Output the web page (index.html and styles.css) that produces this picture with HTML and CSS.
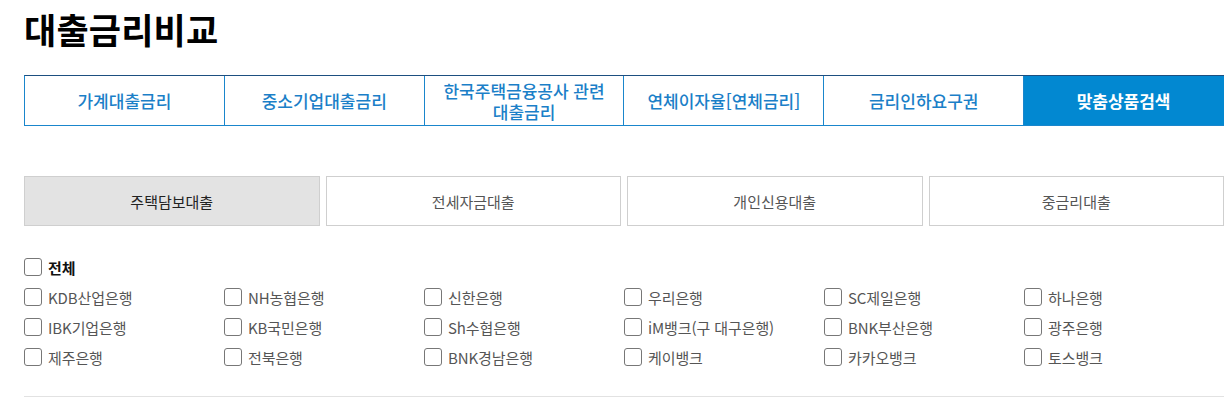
FILE: index.html
```html
<!DOCTYPE html>
<html lang="ko">
<head>
<meta charset="utf-8">
<title>대출금리비교</title>
<link rel="stylesheet" href="styles.css">
</head>
<body>
<div class="page">
  <h1 class="title">대출금리비교</h1>
  <nav class="tabs">
    <a class="tab">가계대출금리</a>
    <a class="tab">중소기업대출금리</a>
    <a class="tab">한국주택금융공사 관련<br>대출금리</a>
    <a class="tab">연체이자율[연체금리]</a>
    <a class="tab">금리인하요구권</a>
    <a class="tab tab-active">맞춤상품검색</a>
  </nav>
  <div class="subtabs">
    <a class="subtab subtab-active">주택담보대출</a>
    <a class="subtab">전세자금대출</a>
    <a class="subtab">개인신용대출</a>
    <a class="subtab">중금리대출</a>
  </div>
  <div class="checks">
    <label class="check check-all"><span class="box"></span>전체</label>
    <div class="check-grid">
      <label class="check"><span class="box"></span>KDB산업은행</label>
      <label class="check"><span class="box"></span>NH농협은행</label>
      <label class="check"><span class="box"></span>신한은행</label>
      <label class="check"><span class="box"></span>우리은행</label>
      <label class="check"><span class="box"></span>SC제일은행</label>
      <label class="check"><span class="box"></span>하나은행</label>
      <label class="check"><span class="box"></span>IBK기업은행</label>
      <label class="check"><span class="box"></span>KB국민은행</label>
      <label class="check"><span class="box"></span>Sh수협은행</label>
      <label class="check"><span class="box"></span>iM뱅크(구 대구은행)</label>
      <label class="check"><span class="box"></span>BNK부산은행</label>
      <label class="check"><span class="box"></span>광주은행</label>
      <label class="check"><span class="box"></span>제주은행</label>
      <label class="check"><span class="box"></span>전북은행</label>
      <label class="check"><span class="box"></span>BNK경남은행</label>
      <label class="check"><span class="box"></span>케이뱅크</label>
      <label class="check"><span class="box"></span>카카오뱅크</label>
      <label class="check"><span class="box"></span>토스뱅크</label>
    </div>
  </div>
  <div class="divider"></div>
</div>
</body>
</html>
```
FILE: styles.css
```css
* { box-sizing: border-box; }
html, body { margin: 0; padding: 0; background: #fff; }
body {
  font-family: "Noto Sans CJK KR", "Noto Sans", sans-serif;
  color: #333;
}
.page {
  width: 1200px;
  margin-left: 24px;
}
.title {
  margin: 8px 0 0;
  font-size: 35px;
  line-height: 42px;
  font-weight: 700;
  color: #000;
  letter-spacing: 0.2px;
}
.tabs {
  display: flex;
  margin-top: 25px;
  border-top: 1px solid #1d4f80;
  border-bottom: 1px solid #1a86cc;
  border-left: 1px solid #1a86cc;
  height: 51px;
}
.tab {
  flex: 1 1 0;
  display: flex;
  align-items: center;
  justify-content: center;
  text-align: center;
  font-size: 17px;
  line-height: 21px;
  font-weight: 500;
  color: #1b7fc8;
  letter-spacing: 0;
  border-right: 1px solid #1a86cc;
}
.tab-active {
  background: #0288d1;
  color: #fff;
  font-weight: 700;
  border-right-color: #0288d1;
}
.subtabs {
  display: flex;
  gap: 6px;
  margin-top: 50px;
}
.subtab {
  flex: 1 1 0;
  height: 50px;
  display: flex;
  align-items: center;
  justify-content: center;
  border: 1px solid #cfcfcf;
  font-size: 15px;
  color: #555;
  letter-spacing: 0;
}
.subtab-active {
  background: #e3e3e3;
  color: #222;
}
.checks {
  margin-top: 26px;
}
.check {
  display: flex;
  align-items: center;
  height: 30px;
  font-size: 15px;
  color: #555;
  letter-spacing: -0.1px;
}
.check-all {
  font-weight: 700;
  color: #111;
  letter-spacing: 0;
}
.box {
  width: 18px;
  height: 18px;
  border: 1px solid #777;
  border-radius: 3px;
  margin-right: 6px;
  flex: none;
  background: #fff;
}
.check-grid {
  display: grid;
  grid-template-columns: repeat(6, 200px);
}
.divider {
  margin-top: 24px;
  height: 1px;
  background: #e2e2e2;
}
```
